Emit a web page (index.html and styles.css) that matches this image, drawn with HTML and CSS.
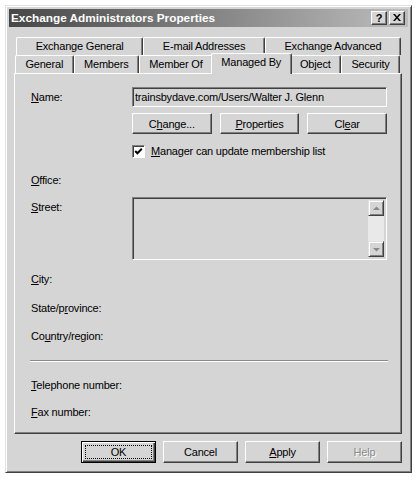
FILE: index.html
```html
<!DOCTYPE html>
<html>
<head>
<meta charset="utf-8">
<title>Exchange Administrators Properties</title>
<link rel="stylesheet" href="styles.css">
</head>
<body>
<div class="window">
  <div class="titlebar">
    <span class="title">Exchange Administrators Properties</span>
    <div class="caption-btns">
      <span class="cbtn cbtn-help">?</span>
      <span class="cbtn cbtn-close"><svg width="8" height="7" viewBox="0 0 8 7"><path d="M0 0h2l2 2.4L6 0h2L5 3.5 8 7H6L4 4.6 2 7H0l3-3.5z" fill="#000"/></svg></span>
    </div>
  </div>
  <div class="client">
    <div class="tabs">
      <div class="tabrow tabrow-back">
        <div class="tab">Exchange General</div>
        <div class="tab">E-mail Addresses</div>
        <div class="tab">Exchange Advanced</div>
      </div>
      <div class="tabrow tabrow-front">
        <div class="tab">General</div>
        <div class="tab">Members</div>
        <div class="tab">Member Of</div>
        <div class="tab selected">Managed By</div>
        <div class="tab">Object</div>
        <div class="tab">Security</div>
      </div>
    </div>
    <div class="panel">
      <div class="frow row-name">
        <span class="lbl"><u>N</u>ame:</span>
        <div class="textbox">trainsbydave.com/Users/Walter J. Glenn</div>
      </div>
      <div class="frow row-btns">
        <span></span>
        <div class="btn-group">
          <button class="btn">C<u>h</u>ange...</button>
          <button class="btn"><u>P</u>roperties</button>
          <button class="btn">Cl<u>e</u>ar</button>
        </div>
      </div>
      <div class="frow row-check">
        <span></span>
        <div class="checkline">
          <span class="check"><svg width="9" height="9" viewBox="0 0 9 9"><polyline points="1.2,4 3.4,6.3 7.8,1.8" fill="none" stroke="#000" stroke-width="2"/></svg></span>
          <span class="checklabel"><u>M</u>anager can update membership list</span>
        </div>
      </div>
      <div class="frow row-plain row-office">
        <span class="lbl"><u>O</u>ffice:</span>
      </div>
      <div class="frow row-street">
        <span class="lbl lbl-top"><u>S</u>treet:</span>
        <div class="textarea">
          <div class="ta-body"></div>
          <div class="vscroll">
            <span class="sbtn"><svg width="7" height="5" viewBox="0 0 7 5"><path d="M3.5 0.5L7 4H0z" fill="#8a8a8a"/></svg></span>
            <span class="strack"></span>
            <span class="sbtn"><svg width="7" height="5" viewBox="0 0 7 5"><path d="M0 1h7L3.5 4.5z" fill="#8a8a8a"/></svg></span>
          </div>
        </div>
      </div>
      <div class="frow row-plain row-city">
        <span class="lbl"><u>C</u>ity:</span>
      </div>
      <div class="frow row-plain row-state">
        <span class="lbl">State/p<u>r</u>ovince:</span>
      </div>
      <div class="frow row-plain row-country">
        <span class="lbl">Co<u>u</u>ntry/region:</span>
      </div>
      <div class="separator"></div>
      <div class="frow row-plain row-phone">
        <span class="lbl"><u>T</u>elephone number:</span>
      </div>
      <div class="frow row-plain row-fax">
        <span class="lbl"><u>F</u>ax number:</span>
      </div>
    </div>
    <div class="dialog-btns">
      <button class="btn dbtn default"><span class="focus">OK</span></button>
      <button class="btn dbtn"><span class="nofocus">Cancel</span></button>
      <button class="btn dbtn"><span class="nofocus"><u>A</u>pply</span></button>
      <button class="btn dbtn disabled"><span class="nofocus">Help</span></button>
    </div>
  </div>
</div>
</body>
</html>
```
FILE: styles.css
```css
* { box-sizing: border-box; }

body {
  margin: 0;
  background: #ffffff;
  font-family: "Liberation Sans", Arial, sans-serif;
  font-size: 11px;
  letter-spacing: -0.2px;
  color: #000;
}

.window {
  margin: 5px 0 0 5px;
  width: 407px;
  height: 468px;
  background: #d5d5d5;
  border: 1px solid;
  border-color: #e2e2e2 #404040 #404040 #e2e2e2;
  box-shadow: inset 1px 1px #ffffff, inset -1px -1px #808080;
  padding: 3px;
  display: flex;
  flex-direction: column;
}

.titlebar {
  height: 18px;
  flex: none;
  display: flex;
  align-items: center;
  justify-content: space-between;
  padding: 0 3px 0 2px;
  background: linear-gradient(to right, #474747 0%, #7d7d7d 45%, #bdbdbd 100%);
}

.title {
  color: #ffffff;
  font-weight: bold;
  font-size: 11.8px;
  letter-spacing: 0;
}

.caption-btns {
  display: flex;
  gap: 2px;
}

.cbtn {
  width: 16px;
  height: 14px;
  background: #d5d5d5;
  border: 1px solid;
  border-color: #ffffff #404040 #404040 #ffffff;
  box-shadow: inset -1px -1px #808080;
  display: flex;
  align-items: center;
  justify-content: center;
  font-weight: bold;
  font-size: 11px;
  line-height: 12px;
  letter-spacing: 0;
}

.cbtn-close svg { display: block; margin-top: -1px; }
.cbtn-help { padding-bottom: 1px; }

.client {
  flex: 1;
  padding: 10px 6px 0 5px;
  display: flex;
  flex-direction: column;
}

.tabrow {
  display: flex;
  height: 18px;
}

.tabrow-back { margin: 0 1px 0 2px; }
.tabrow-front { margin: 0 2px 0 1px; }

.tab {
  flex: 1 1 auto;
  text-align: center;
  white-space: nowrap;
  line-height: 16px;
  height: 18px;
  background: #d5d5d5;
  border-top: 1px solid #ffffff;
  border-left: 1px solid #ffffff;
  border-right: 1px solid #404040;
  border-radius: 2px 2px 0 0;
  box-shadow: inset -1px 0 #808080;
}

.tab.selected {
  margin: -2px -2px -1px;
  height: 21px;
  line-height: 17px;
  position: relative;
  z-index: 1;
}

.panel {
  height: 361px;
  flex: none;
  border: 1px solid;
  border-color: #ffffff #404040 #404040 #ffffff;
  box-shadow: inset -1px -1px #808080;
  padding: 13px 14px 0 16px;
  display: flex;
  flex-direction: column;
}

.frow {
  display: grid;
  grid-template-columns: 101px 255px;
  align-items: center;
}

.lbl { white-space: nowrap; }

.row-name { height: 20px; }

.textbox {
  height: 20px;
  border: 1px solid;
  border-color: #808080 #ffffff #ffffff #808080;
  box-shadow: inset 1px 1px #404040, inset -1px -1px #d5d5d5;
  padding: 0 2px;
  line-height: 18px;
  white-space: nowrap;
  overflow: hidden;
}

.row-btns { margin-top: 6px; }

.btn-group {
  display: grid;
  grid-template-columns: repeat(3, 1fr);
  gap: 8px;
}

.btn {
  font: inherit;
  letter-spacing: inherit;
  color: #000;
  height: 21px;
  background: #d5d5d5;
  border: 1px solid;
  border-color: #ffffff #404040 #404040 #ffffff;
  box-shadow: inset -1px -1px #808080;
  padding: 0;
  margin: 0;
}

.row-check { margin-top: 11px; height: 13px; }

.checkline {
  display: flex;
  align-items: center;
  gap: 6px;
}

.check {
  width: 13px;
  height: 13px;
  flex: none;
  background: #ffffff;
  border: 1px solid;
  border-color: #808080 #ffffff #ffffff #808080;
  box-shadow: inset 1px 1px #404040;
  padding: 1px 0 0 1px;
  display: flex;
}

.check svg { display: block; }

.checklabel { white-space: nowrap; line-height: 13px; }

.row-plain { height: 14px; line-height: 14px; }
.row-office { margin-top: 15px; }

.row-street { margin-top: 10px; align-items: start; }
.lbl-top { padding-top: 3px; line-height: 14px; }

.textarea {
  height: 63px;
  border: 1px solid;
  border-color: #808080 #ffffff #ffffff #808080;
  box-shadow: inset 1px 1px #404040, inset -1px -1px #d5d5d5;
  padding: 1px;
  display: flex;
}

.ta-body { flex: 1; }

.vscroll {
  width: 16px;
  display: flex;
  flex-direction: column;
  margin: 1px 1px 1px 0;
}

.sbtn {
  width: 16px;
  height: 16px;
  flex: none;
  background: #d5d5d5;
  border: 1px solid;
  border-color: #e2e2e2 #404040 #404040 #e2e2e2;
  box-shadow: inset 1px 1px #ffffff, inset -1px -1px #808080;
  display: flex;
  align-items: center;
  justify-content: center;
}

.sbtn svg { display: block; }

.strack {
  flex: 1;
  background: #e9e9e9;
}

.row-city { margin-top: 12px; }
.row-state { margin-top: 15px; }
.row-country { margin-top: 14px; }

.separator {
  margin: 17px -1px 0 -1px;
  height: 2px;
  border-top: 1px solid #8a8a8a;
  border-bottom: 1px solid #ffffff;
}

.row-phone { margin-top: 16px; }
.row-fax { margin-top: 13px; }

.dialog-btns {
  margin-top: 7px;
  display: flex;
  justify-content: flex-end;
  gap: 7px;
}

.dbtn {
  width: 75px;
  height: 22px;
  display: flex;
  padding: 2px;
}

.dbtn .nofocus,
.dbtn .focus {
  flex: 1;
  display: flex;
  align-items: center;
  justify-content: center;
  border: 1px solid transparent;
}

.dbtn.default {
  border-color: #000;
  box-shadow: inset 1px 1px #ffffff, inset -1px -1px #404040, inset -2px -2px #808080;
  padding: 2px;
}

.dbtn.default .focus {
  border: 1px dotted #000;
  margin: 1px;
}

.dbtn.disabled {
  color: #8a8a8a;
  text-shadow: 1px 1px #ffffff;
}
```
